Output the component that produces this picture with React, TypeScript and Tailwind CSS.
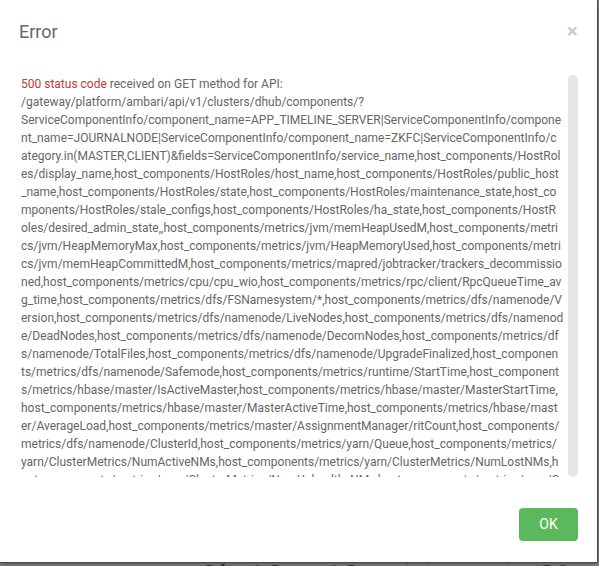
import React from "react";

const lines: string[] = [
  "/gateway/platform/ambari/api/v1/clusters/dhub/components/?",
  "ServiceComponentInfo/component_name=APP_TIMELINE_SERVER|ServiceComponentInfo/compone",
  "nt_name=JOURNALNODE|ServiceComponentInfo/component_name=ZKFC|ServiceComponentInfo/c",
  "ategory.in(MASTER,CLIENT)&fields=ServiceComponentInfo/service_name,host_components/HostRol",
  "es/display_name,host_components/HostRoles/host_name,host_components/HostRoles/public_host",
  "_name,host_components/HostRoles/state,host_components/HostRoles/maintenance_state,host_co",
  "mponents/HostRoles/stale_configs,host_components/HostRoles/ha_state,host_components/HostR",
  "oles/desired_admin_state,,host_components/metrics/jvm/memHeapUsedM,host_components/metri",
  "cs/jvm/HeapMemoryMax,host_components/metrics/jvm/HeapMemoryUsed,host_components/metri",
  "cs/jvm/memHeapCommittedM,host_components/metrics/mapred/jobtracker/trackers_decommissio",
  "ned,host_components/metrics/cpu/cpu_wio,host_components/metrics/rpc/client/RpcQueueTime_av",
  "g_time,host_components/metrics/dfs/FSNamesystem/*,host_components/metrics/dfs/namenode/V",
  "ersion,host_components/metrics/dfs/namenode/LiveNodes,host_components/metrics/dfs/namenod",
  "e/DeadNodes,host_components/metrics/dfs/namenode/DecomNodes,host_components/metrics/df",
  "s/namenode/TotalFiles,host_components/metrics/dfs/namenode/UpgradeFinalized,host_componen",
  "ts/metrics/dfs/namenode/Safemode,host_components/metrics/runtime/StartTime,host_component",
  "s/metrics/hbase/master/IsActiveMaster,host_components/metrics/hbase/master/MasterStartTime,",
  "host_components/metrics/hbase/master/MasterActiveTime,host_components/metrics/hbase/mast",
  "er/AverageLoad,host_components/metrics/master/AssignmentManager/ritCount,host_components/",
  "metrics/dfs/namenode/ClusterId,host_components/metrics/yarn/Queue,host_components/metrics/",
  "yarn/ClusterMetrics/NumActiveNMs,host_components/metrics/yarn/ClusterMetrics/NumLostNMs,h",
  "ost_components/metrics/yarn/ClusterMetrics/NumUnhealthyNMs,host_components/metrics/yarn/C",
];

const font = { fontFamily: "Roboto, 'Liberation Sans', sans-serif" };

export default function App() {
  return (
    <div className="relative h-[566px] w-[599px] overflow-hidden bg-[#8a8a8a]" style={font}>
      {/* page behind the backdrop */}
      <div className="flex h-full flex-col">
        <div className="flex-1" />
        <div className="flex h-[4px] items-start overflow-hidden text-[#3c3c3c]">
          <div className="w-[200px]" />
          <div className="w-[207px] text-[34px] leading-[0.9]">2h 19m 12s</div>
          <div className="h-full w-[20px] border-l border-[#777]" />
          <div className="h-full w-[80px] border-l border-[#777]" />
          <div className="h-full w-[30px] border-l border-[#777]" />
          <div className="text-[34px] leading-[0.9]">0%</div>
        </div>
      </div>

      {/* modal */}
      <div className="absolute left-0 top-0 flex h-[563px] w-[598px] flex-col border-b border-r border-[#4a4a4a] bg-white shadow-[0_2px_6px_rgba(0,0,0,0.4)]">
        <div className="flex h-[75px] items-start justify-between pl-[19px] pr-[19px] pt-[20px]">
          <h4 className="text-[18px] leading-[24px] text-[#666]">Error</h4>
          <button className="mt-[-1px] text-[21px] font-bold leading-[24px] text-black opacity-20">×</button>
        </div>

        <div className="flex h-[402px] pl-[21px] pr-[19px]">
          <div className="h-full flex-1 overflow-hidden whitespace-nowrap text-[12px] leading-[18px] text-[#666]">
            <div>
              <span className="text-[#be3a34]">500 status code</span> received on GET method for API:
            </div>
            {lines.map((l, i) => (
              <div key={i}>{l}</div>
            ))}
          </div>
          <div className="ml-[2px] h-full w-[10px] rounded-[5px] bg-[#e6e6e6]" />
        </div>

        <div className="flex flex-1 items-start justify-end pr-[19px] pt-[31px]">
          <button className="h-[33px] w-[59px] rounded-[4px] bg-[#5cb85c] text-[14px] text-white">OK</button>
        </div>
      </div>
    </div>
  );
}
